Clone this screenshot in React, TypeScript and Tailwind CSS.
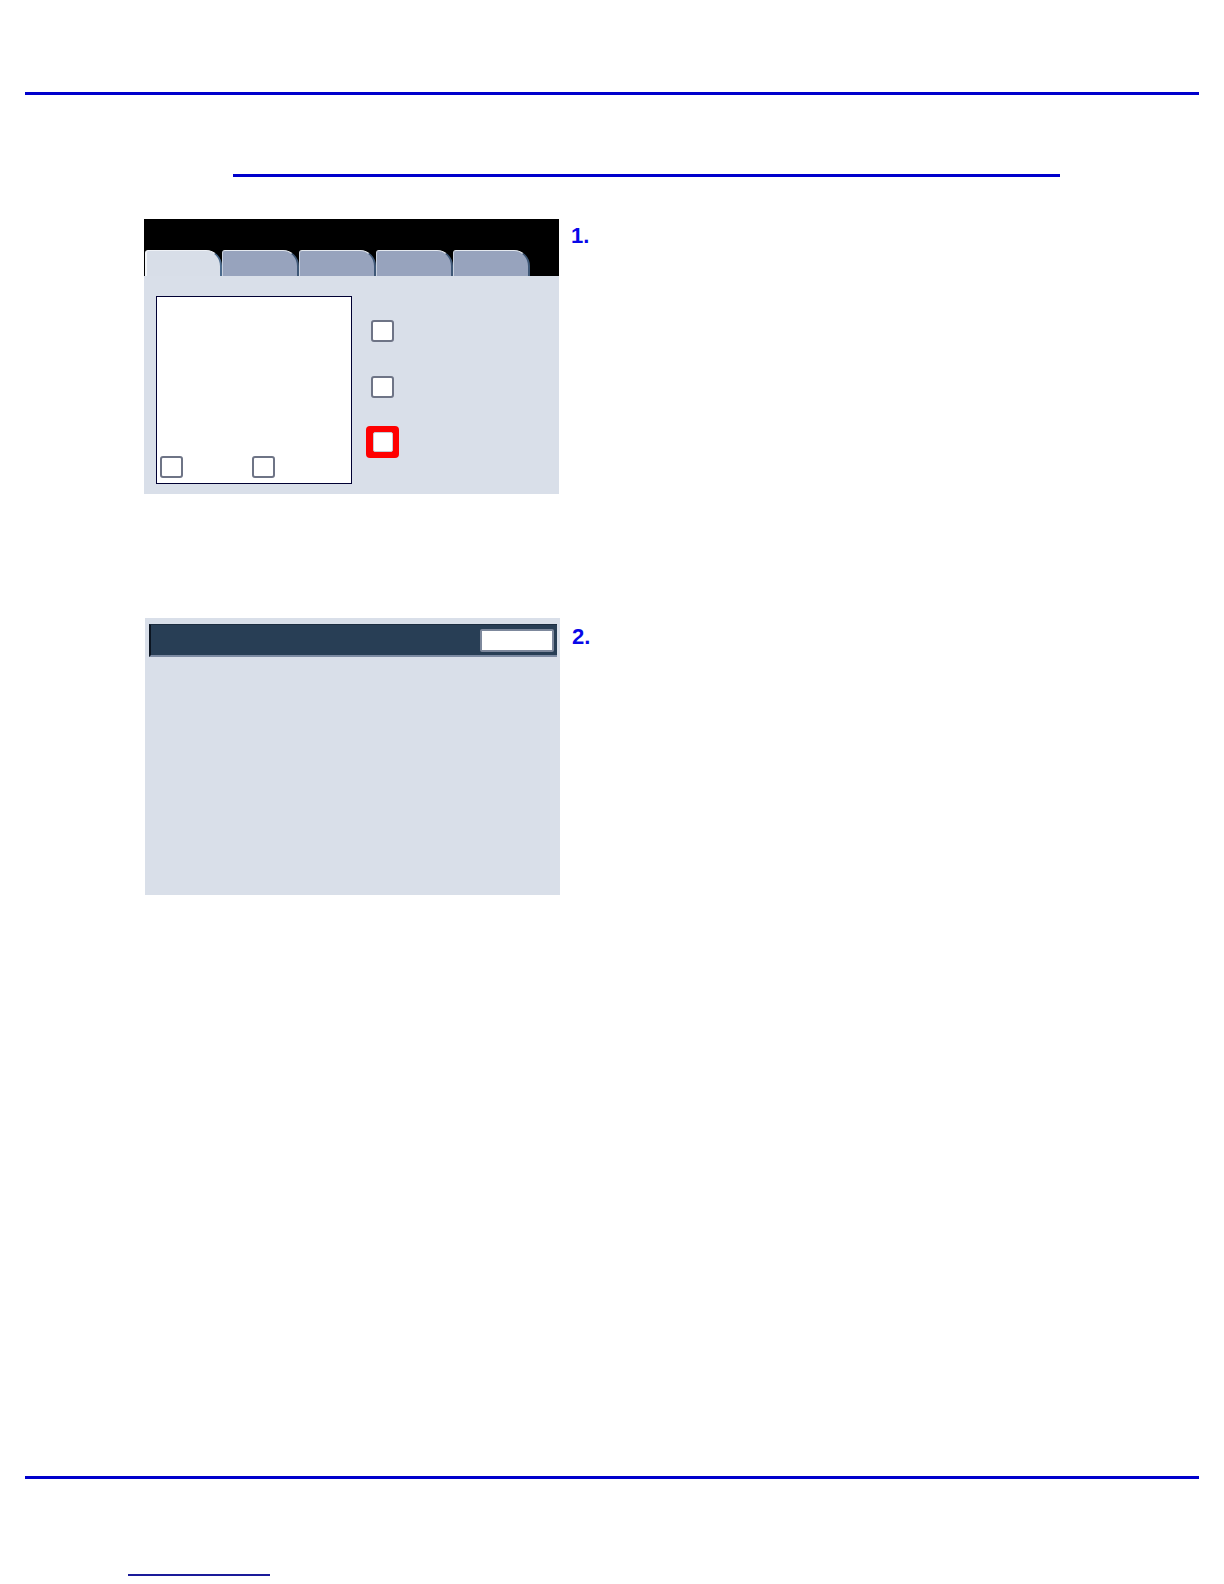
function Box({ className = "" }: { className?: string }) {
  return (
    <div
      className={`h-[22px] w-[23px] rounded-[3px] border-2 border-[#6e7486] bg-white ${className}`}
    />
  );
}

function Tab({ active }: { active?: boolean }) {
  return (
    <div
      className={
        active
          ? "h-[26px] w-[77px] rounded-tl-[3px] rounded-tr-[16px] border-l-2 border-t border-r-2 border-l-[#f2f5f9] border-t-[#eef1f6] border-r-[#4b6a8c] bg-[#d8dee8]"
          : "h-[26px] w-[77px] rounded-tl-[3px] rounded-tr-[16px] border-l border-t border-r-2 border-l-[#c9d1df] border-t-[#e3e8ef] border-r-[#3e5776] bg-[#97a3bd]"
      }
    />
  );
}

function StepNumber({ n }: { n: string }) {
  return (
    <div
      className="ml-[12px] text-[22px] font-bold leading-none text-[#0808e8]"
      style={{ fontFamily: '"Liberation Sans", Arial, sans-serif' }}
    >
      {n}
    </div>
  );
}

export default function App() {
  return (
    <div className="h-[1584px] w-[1224px] overflow-hidden bg-white">
      <div className="pt-[92px]">
        <div className="mx-[25px] h-[3px] bg-[#0000cc]" />
      </div>

      <div className="ml-[233px] mt-[79px] h-[3px] w-[827px] bg-[#0000cc]" />

      {/* step 1 */}
      <div className="ml-[144px] mt-[42px] flex items-start">
        <div className="flex h-[275px] w-[415px] flex-col bg-[#d9dfe9]">
          <div className="flex h-[57px] items-end bg-black pl-[1px]">
            <Tab active />
            <Tab />
            <Tab />
            <Tab />
            <Tab />
          </div>
          <div className="flex flex-1 pl-[12px] pt-[20px]">
            <div className="flex h-[188px] w-[196px] items-end gap-[69px] border border-[#000033] bg-white pb-[5px] pl-[3px]">
              <Box />
              <Box />
            </div>
            <div className="ml-[14px] flex flex-col pt-[24px]">
              <Box className="ml-[5px]" />
              <Box className="ml-[5px] mt-[34px]" />
              <div className="mt-[28px] flex h-[32px] w-[33px] items-center justify-center rounded-[4px] bg-[#ff0000]">
                <div className="h-[20px] w-[20px] rounded-[2px] border border-[#c8ccd4] bg-white" />
              </div>
            </div>
          </div>
        </div>
        <div className="pt-[6px]">
          <StepNumber n="1." />
        </div>
      </div>

      {/* step 2 */}
      <div className="ml-[145px] mt-[124px] flex items-start">
        <div className="h-[277px] w-[415px] bg-[#d9dfe9] pr-[3px] pt-[6px]">
          <div className="ml-[4px] flex h-[33px] items-center justify-end border-b-2 border-l-2 border-t border-b-[#7c8aa2] border-l-[#0b1420] border-t-[#1c2d40] bg-[#283e55] pr-[3px]">
            <div className="h-[23px] w-[74px] rounded-[2px] border-2 border-[#7d889c] bg-white" />
          </div>
        </div>
        <div className="pt-[8px]">
          <StepNumber n="2." />
        </div>
      </div>

      <div className="mx-[25px] mt-[581px] h-[3px] bg-[#0000cc]" />

      <div className="ml-[128px] mt-[95px] h-[2px] w-[142px] bg-[#1a1a99]" />
    </div>
  );
}
